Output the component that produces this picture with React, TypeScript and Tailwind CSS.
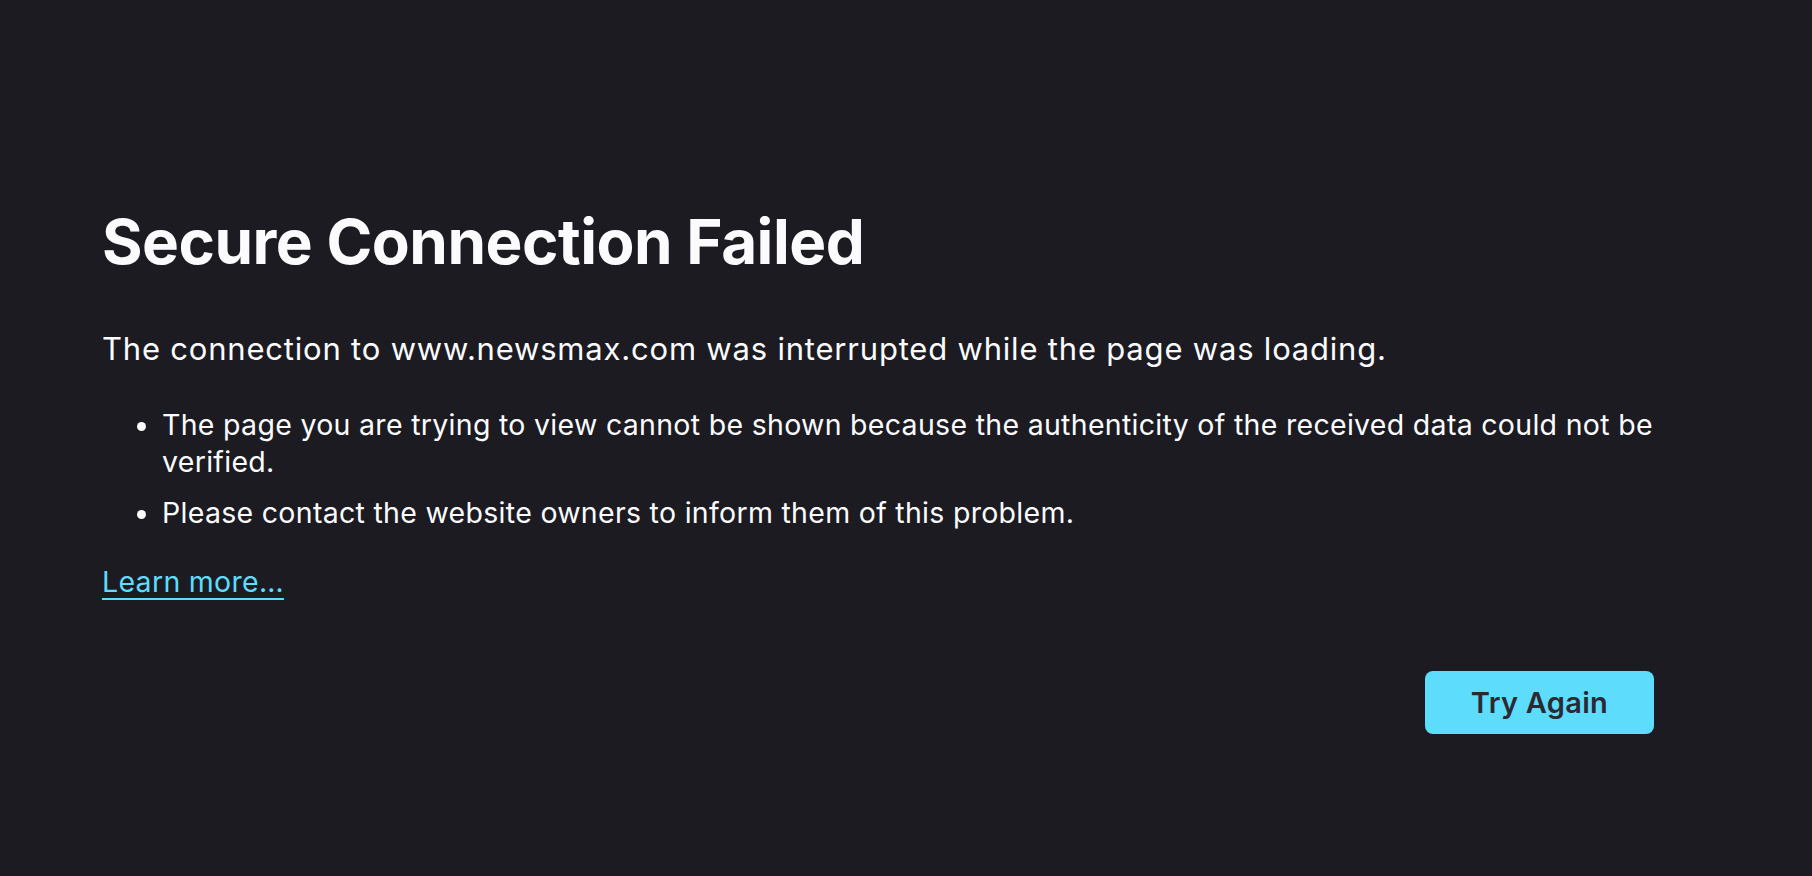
import * as React from 'react';

export default function App() {
  return (
    <div className="min-h-[876px] w-full bg-[#1c1b22] font-['Inter',sans-serif] text-[#fbfbfe]">
      <div className="w-[1654px] pl-[102px] pt-[204px]">
        <h1 className="text-[62px] font-bold leading-[76px] tracking-[-0.5px]">
          Secure Connection Failed
        </h1>

        <p className="mt-[46px] text-[31px] leading-[45px] tracking-[0.8px]">
          The connection to www.newsmax.com was interrupted while the page was loading.
        </p>

        <ul className="mt-[35px] list-disc space-y-[14px] pl-[60px] text-[28.5px] leading-[37px] tracking-[0.3px]">
          <li>
            The page you are trying to view cannot be shown because the authenticity of the
            received data could not be verified.
          </li>
          <li>Please contact the website owners to inform them of this problem.</li>
        </ul>

        <a
          href="#"
          className="mt-[28px] inline-block text-[28.5px] leading-[45px] tracking-[0.3px] text-[#5edcfc] underline underline-offset-[6px]"
        >
          Learn more…
        </a>

        <div className="mt-[67px] flex justify-end">
          <button
            type="button"
            className="h-[63px] w-[229px] rounded-[8px] bg-[#5edcfc] text-[29px] font-semibold tracking-[0.3px] text-[#2b2a33]"
          >
            Try Again
          </button>
        </div>
      </div>
    </div>
  );
}
